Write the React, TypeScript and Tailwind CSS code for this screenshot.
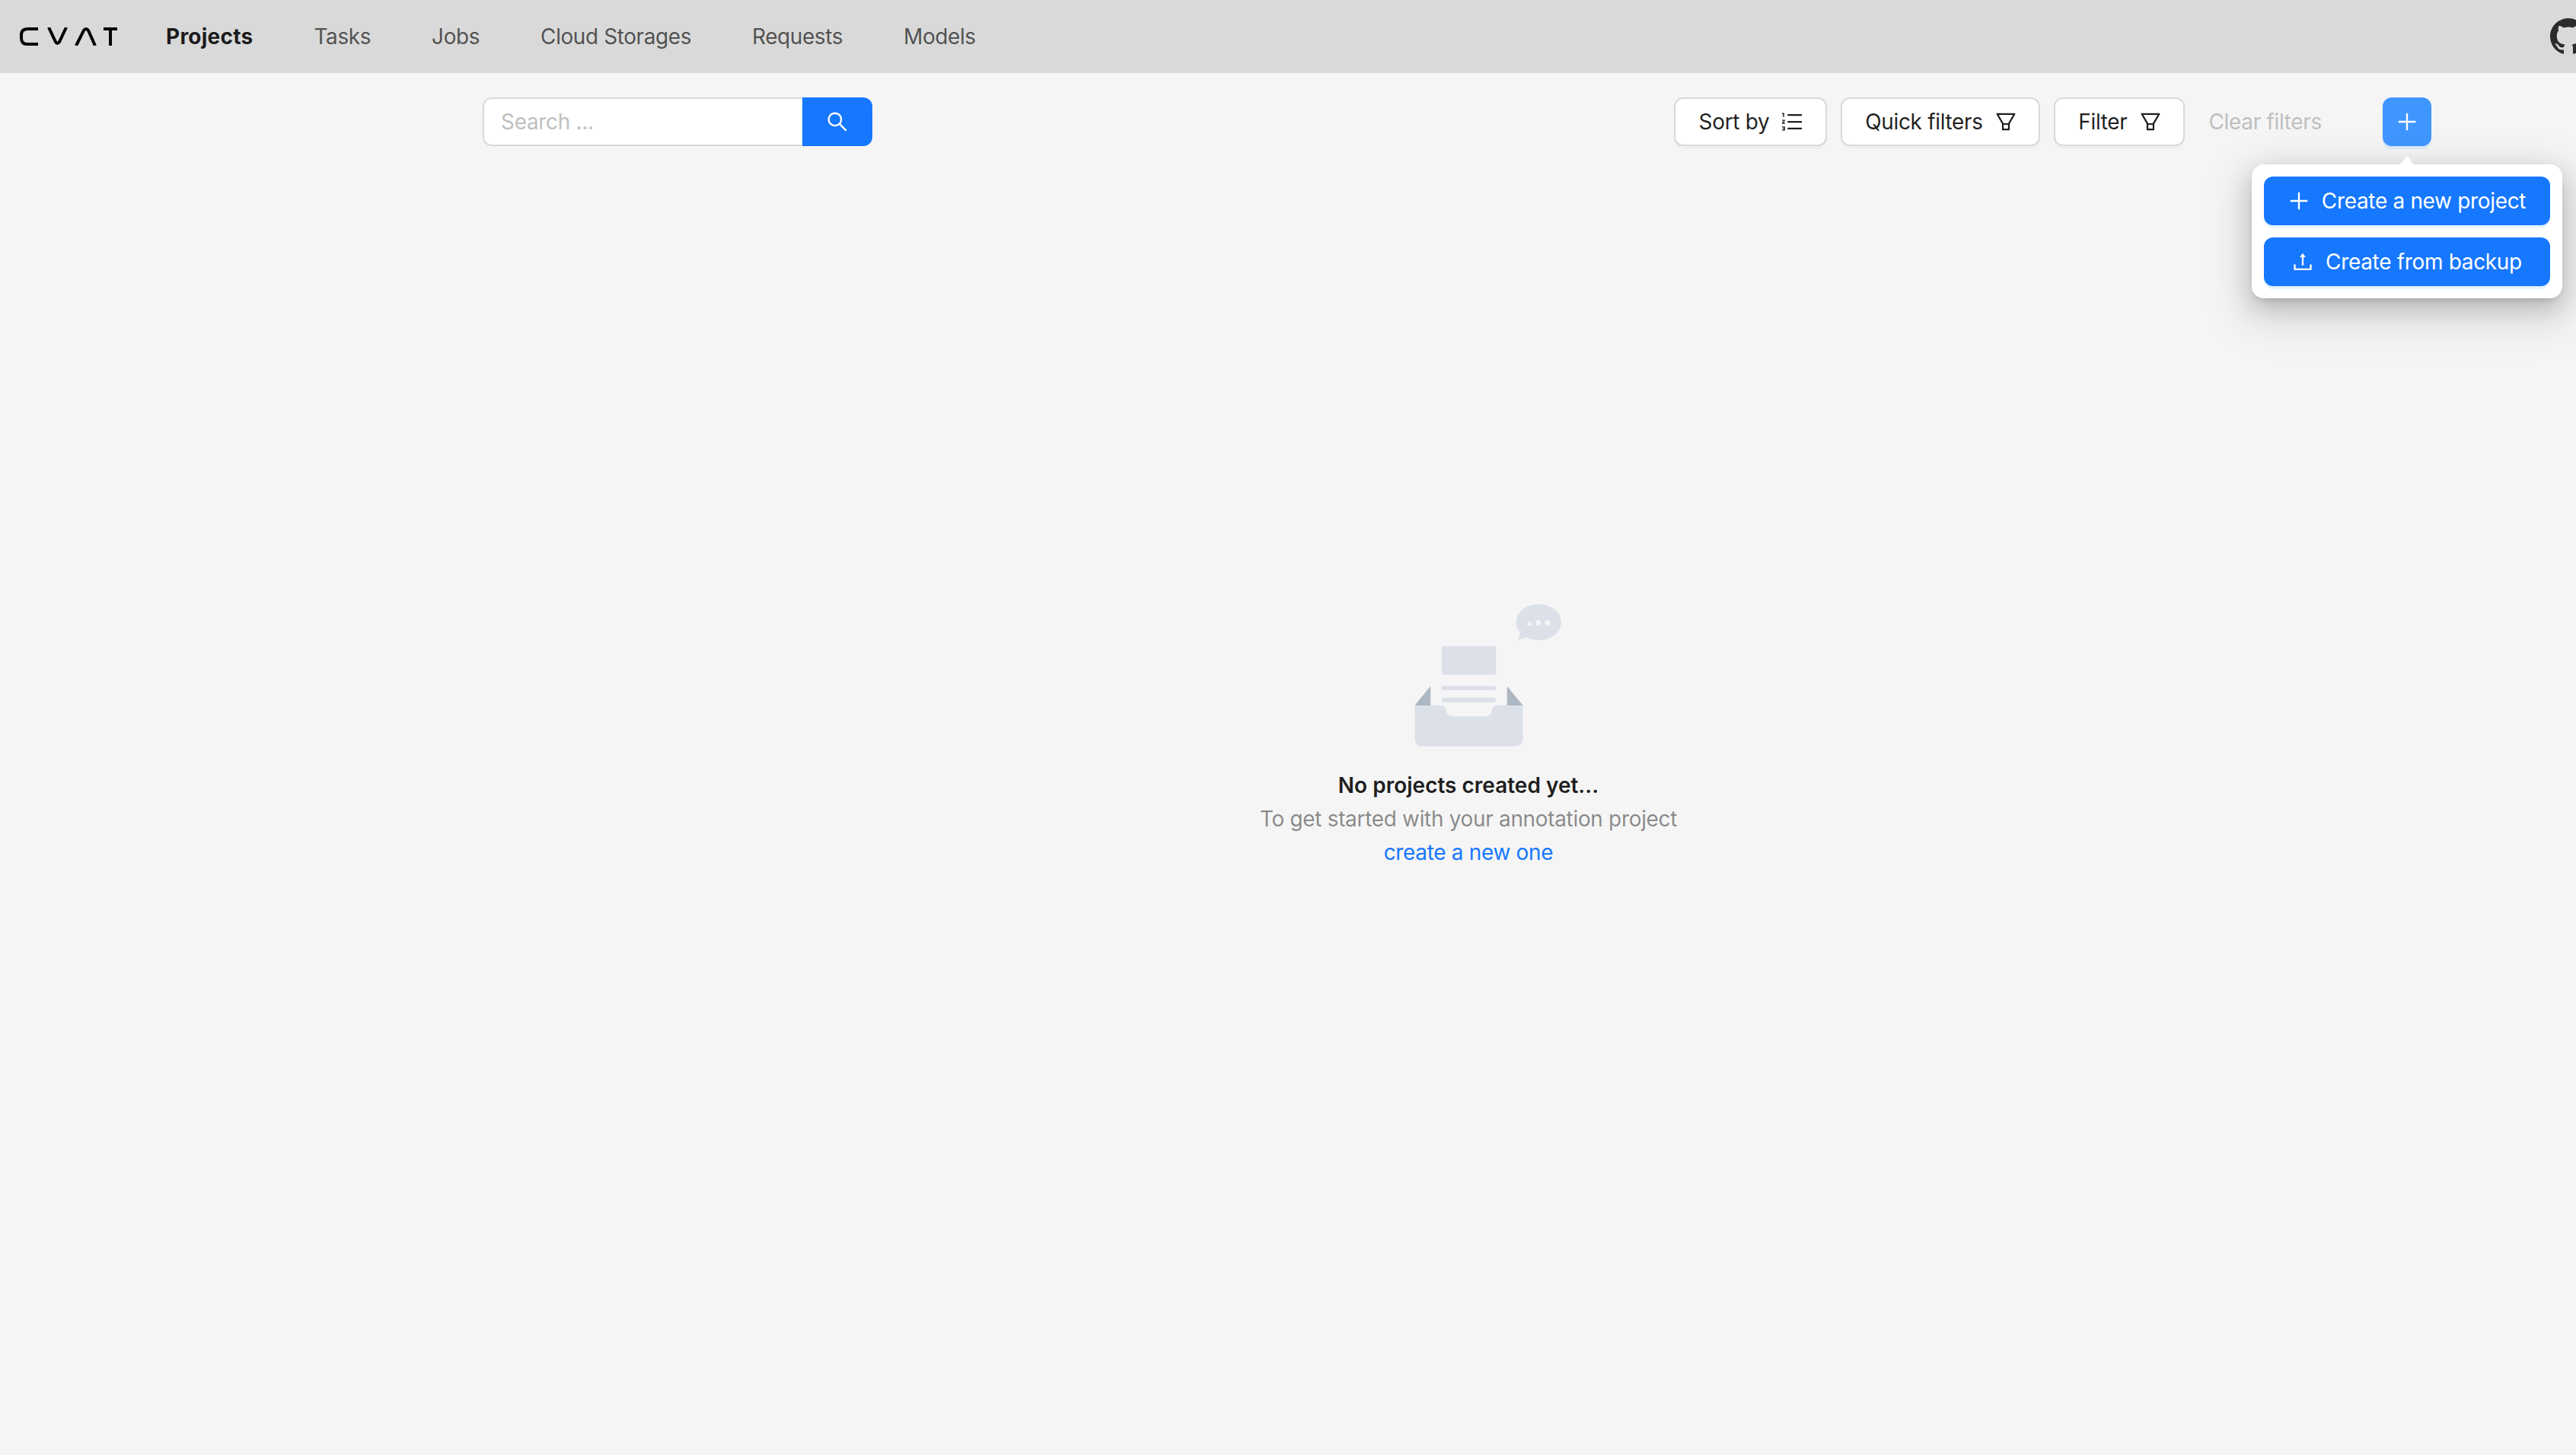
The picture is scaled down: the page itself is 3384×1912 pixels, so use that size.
import React from "react";

const P = ({ d, className }: { d: string; className: string }) => (
  <svg viewBox="64 64 896 896" fill="currentColor" className={className}>
    <path d={d} />
  </svg>
);

const plus = "M482 152h60q8 0 8 8v704q0 8-8 8h-60q-8 0-8-8V160q0-8 8-8zM160 474h704q8 0 8 8v60q0 8-8 8H160q-8 0-8-8v-60q0-8 8-8z";
const search = "M909.6 854.5L649.9 594.8C690.2 542.7 712 479 712 412c0-80.2-31.3-155.4-87.9-212.1-56.6-56.7-132-87.9-212.1-87.9s-155.5 31.3-212.1 87.9C143.2 256.5 112 331.8 112 412c0 80.1 31.3 155.5 87.9 212.1C256.5 680.8 331.8 712 412 712c67 0 130.6-21.8 182.7-62l259.7 259.6a8.2 8.2 0 0011.6 0l43.6-43.5a8.2 8.2 0 000-11.6zM570.4 570.4C528 612.7 471.8 636 412 636s-116-23.3-158.4-65.6C211.3 528 188 471.8 188 412s23.3-116.1 65.6-158.4C296 211.3 352.2 188 412 188s116.1 23.2 158.4 65.6S636 352.2 636 412s-23.3 116.1-65.6 158.4z";
const filter = "M880.1 154H143.9c-24.5 0-39.8 26.7-27.5 48L349 597.4V838c0 17.7 14.2 32 31.8 32h262.4c17.6 0 31.8-14.3 31.8-32V597.4L907.7 202c12.2-21.3-3.1-48-27.6-48zM603.4 798H420.6V642h182.9v156zm9.6-236.6l-9.5 16.6h-183l-9.5-16.6L212.7 226h598.6L613 561.4z";
const ordered = "M920 760H336c-4.4 0-8 3.6-8 8v56c0 4.4 3.6 8 8 8h584c4.4 0 8-3.6 8-8v-56c0-4.4-3.6-8-8-8zm0-568H336c-4.4 0-8 3.6-8 8v56c0 4.4 3.6 8 8 8h584c4.4 0 8-3.6 8-8v-56c0-4.4-3.6-8-8-8zm0 284H336c-4.4 0-8 3.6-8 8v56c0 4.4 3.6 8 8 8h584c4.4 0 8-3.6 8-8v-56c0-4.4-3.6-8-8-8zM216 712H100c-2.2 0-4 1.8-4 4v34c0 2.2 1.8 4 4 4h72.4v20.5h-35.7c-2.2 0-4 1.8-4 4v34c0 2.2 1.8 4 4 4h35.7V838H100c-2.2 0-4 1.8-4 4v34c0 2.2 1.8 4 4 4h116c2.2 0 4-1.8 4-4V716c0-2.2-1.8-4-4-4zM100 188h38v120c0 2.2 1.8 4 4 4h40c2.2 0 4-1.8 4-4V152c0-4.4-3.6-8-8-8h-78c-2.2 0-4 1.8-4 4v36c0 2.2 1.8 4 4 4zm116 240H100c-2.2 0-4 1.8-4 4v36c0 2.2 1.8 4 4 4h68.4l-70.3 77.7a8.3 8.3 0 00-2.1 5.4V592c0 2.2 1.8 4 4 4h116c2.2 0 4-1.8 4-4v-36c0-2.2-1.8-4-4-4h-68.4l70.3-77.7a8.3 8.3 0 002.1-5.4V432c0-2.2-1.8-4-4-4z";
const upload = "M400 317.7h73.9V656c0 4.4 3.6 8 8 8h60c4.4 0 8-3.6 8-8V317.7H624c6.7 0 10.4-7.7 6.3-12.9L518.3 163a8 8 0 00-12.6 0l-112 141.7c-4.1 5.3-.4 13 6.3 13zM878 626h-60c-4.4 0-8 3.6-8 8v154H214V634c0-4.4-3.6-8-8-8h-60c-4.4 0-8 3.6-8 8v198c0 17.7 14.3 32 32 32h684c17.7 0 32-14.3 32-32V634c0-4.4-3.6-8-8-8z";

const Logo = () => (
  <svg viewBox="0 0 128 24" className="w-[128px] h-[24px]" fill="none" stroke="#000" strokeWidth="4">
    <path d="M24 22H10Q2 22 2 14V10Q2 2 10 2H24" />
    <path d="M38 0L47 19Q49 23 52 19L61 0" />
    <path d="M74 24L84 4Q87 0 90 4L99 24" />
    <path d="M110 2H128M119 2V24" />
  </svg>
);

const Github = () => (
  <svg viewBox="0 0 16 16" fill="#2b2b2b" className="w-[48px] h-[48px] shrink-0 ml-auto mr-[-14px]">
    <path d="M8 0C3.58 0 0 3.58 0 8c0 3.54 2.29 6.53 5.47 7.59.4.07.55-.17.55-.38 0-.19-.01-.82-.01-1.49-2.01.37-2.53-.49-2.69-.94-.09-.23-.48-.94-.82-1.13-.28-.15-.68-.52-.01-.53.63-.01 1.08.58 1.23.82.72 1.21 1.87.87 2.33.66.07-.52.28-.87.51-1.07-1.78-.2-3.64-.89-3.64-3.95 0-.87.31-1.59.82-2.15-.08-.2-.36-1.02.08-2.12 0 0 .67-.21 2.2.82.64-.18 1.32-.27 2-.27.68 0 1.36.09 2 .27 1.53-1.04 2.2-.82 2.2-.82.44 1.1.16 1.92.08 2.12.51.56.82 1.27.82 2.15 0 3.07-1.87 3.75-3.65 3.95.29.25.54.73.54 1.48 0 1.07-.01 1.93-.01 2.2 0 .21.15.46.55.38A8.013 8.013 0 0016 8c0-4.42-3.58-8-8-8z" />
  </svg>
);

const Empty = () => (
  <svg viewBox="-95 0 728 660" className="w-[243px] h-[220px]">
    <path d="M544 42C495 42 456 74 456 113C456 130 463 144 472 154L463 184L496 172C510 180 526 184 544 184C593 184 633 152 633 113C633 74 593 42 544 42Z" fill="#dce0e8" />
    <path d="M497 127L509 107L521 127Z" fill="#f5f5f7" />
    <rect x="534" y="106" width="18" height="19" fill="#f5f5f7" />
    <circle cx="579" cy="115" r="11" fill="#f5f5f7" />
    <path d="M119 364V441H56Z" fill="#aeb8c2" />
    <path d="M419 364V441H482Z" fill="#aeb8c2" />
    <rect x="119" y="170" width="300" height="320" fill="#f5f5f7" />
    <rect x="162" y="207" width="214" height="113" rx="8" fill="#dce0e8" />
    <rect x="162" y="364" width="214" height="17" rx="8" fill="#dce0e8" />
    <rect x="162" y="410" width="214" height="18" rx="8" fill="#dce0e8" />
    <path d="M56 441H160Q178 441 180 460Q184 484 200 484H340Q356 484 360 460Q364 441 380 441H482V570Q482 602 450 602H88Q56 602 56 570Z" fill="#dce0e8" />
  </svg>
);

const ToolButton = ({ label, icon, className }: { label: string; icon: string; className: string }) => (
  <div className={`h-[64px] flex items-center justify-center gap-4 bg-white border-2 border-[#d9d9d9] rounded-xl shadow-[0_4px_0_rgba(0,0,0,0.02)] text-[rgba(0,0,0,0.88)] ${className}`}>
    <span>{label}</span>
    <P d={icon} className="w-[28px] h-[28px]" />
  </div>
);

export default function App() {
  return (
    <div className="min-h-[1912px] h-[1912px] overflow-hidden bg-[#f5f5f5] text-[28px] leading-[44px] tracking-[-0.33px] font-['Inter','Liberation_Sans',sans-serif]">
      <header className="h-[96px] bg-[#d9d9d9] flex items-center pl-[26px]">
        <Logo />
        <nav className="flex items-center gap-[80px] ml-[64px] tracking-[-0.42px] text-[rgba(0,0,0,0.65)]">
          <span className="font-bold tracking-[0.25px] text-[rgba(0,0,0,0.88)]">Projects</span>
          <span>Tasks</span>
          <span>Jobs</span>
          <span>Cloud Storages</span>
          <span>Requests</span>
          <span>Models</span>
        </nav>
        <Github />
      </header>

      <div className="mt-[32px] ml-[634px] w-[2560px] h-[64px] flex items-center">
        <div className="flex w-[512px] h-[64px]">
          <div className="flex-1 flex items-center pl-[22px] bg-white border-2 border-r-0 border-[#d9d9d9] rounded-l-xl text-[#bfbfbf]">Search ...</div>
          <div className="w-[92px] flex items-center justify-center bg-[#1677ff] rounded-r-xl text-white">
            <P d={search} className="w-[28px] h-[28px]" />
          </div>
        </div>
        <div className="ml-auto flex items-center">
          <ToolButton label="Sort by" icon={ordered} className="w-[201px]" />
          <ToolButton label="Quick filters" icon={filter} className="w-[262px] ml-[18px]" />
          <ToolButton label="Filter" icon={filter} className="w-[172px] ml-[18px]" />
          <span className="ml-[31px] text-[#bfbfbf]">Clear filters</span>
          <div className="relative ml-[80px] w-[64px] h-[64px] flex items-center justify-center bg-[#4096ff] rounded-xl shadow-[0_4px_0_rgba(5,145,255,0.1)] text-white">
            <P d={plus} className="w-[28px] h-[28px]" />
            <div className="absolute left-[-172px] top-[88px] w-[408px] h-[176px] p-4 flex flex-col gap-4 bg-white rounded-2xl shadow-[0_12px_32px_rgba(0,0,0,0.18),0_6px_12px_-8px_rgba(0,0,0,0.28),0_18px_56px_16px_rgba(0,0,0,0.1)]">
              <svg viewBox="0 0 28 12" className="absolute left-[190px] top-[-11px] w-[28px] h-[12px]" fill="#fff">
                <path d="M0 12C5 12 8 9 12 1.5Q14 -0.5 16 1.5C20 9 23 12 28 12Z" />
              </svg>
              <div className="h-[64px] flex items-center justify-center gap-4 bg-[#1677ff] rounded-xl shadow-[0_4px_0_rgba(5,145,255,0.1)]">
                <P d={plus} className="w-[28px] h-[28px]" />
                <span>Create a new project</span>
              </div>
              <div className="h-[64px] flex items-center justify-center gap-4 bg-[#1677ff] rounded-xl shadow-[0_4px_0_rgba(5,145,255,0.1)]">
                <P d={upload} className="w-[28px] h-[28px]" />
                <span>Create from backup</span>
              </div>
            </div>
          </div>
        </div>
      </div>

      <main className="mt-[588px] pl-[474px] flex flex-col items-center">
        <Empty />
        <div className="mt-[10px] font-semibold tracking-normal text-[rgba(0,0,0,0.88)]">No projects created yet...</div>
        <div className="text-[rgba(0,0,0,0.45)]">To get started with your annotation project</div>
        <div className="text-[#1677ff]">create a new one</div>
      </main>
    </div>
  );
}
